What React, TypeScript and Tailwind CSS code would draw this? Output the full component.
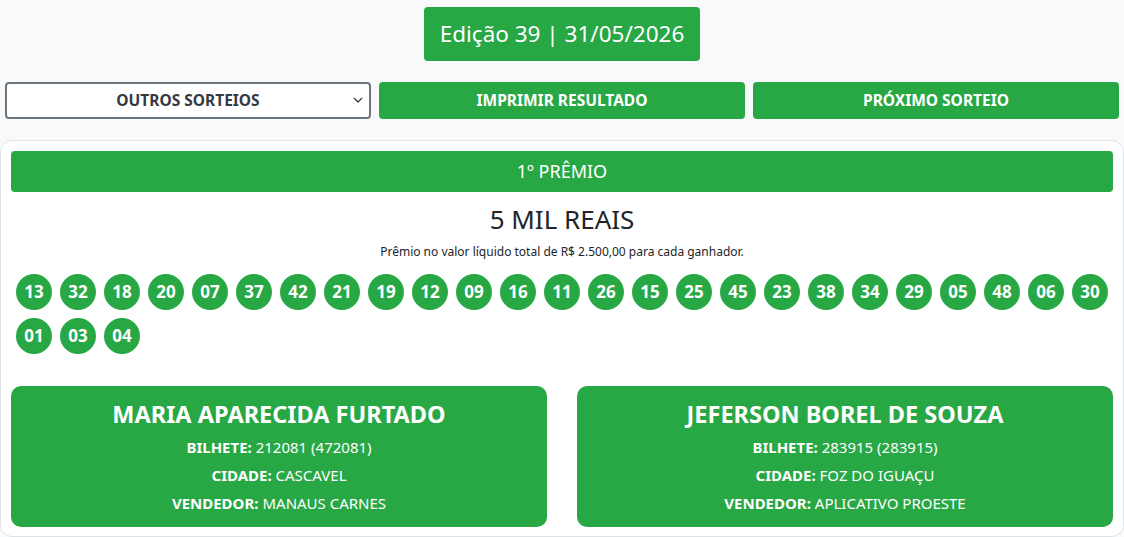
import React from 'react';

const numbers = [
  '13', '32', '18', '20', '07', '37', '42', '21', '19', '12', '09', '16', '11', '26', '15', '25', '45', '23', '38', '34',
  '29', '05', '48', '06', '30', '01', '03', '04',
];

type Winner = {
  name: string;
  bilhete: string;
  cidade: string;
  vendedor: string;
};

const winners: Winner[] = [
  { name: 'MARIA APARECIDA FURTADO', bilhete: '212081 (472081)', cidade: 'CASCAVEL', vendedor: 'MANAUS CARNES' },
  { name: 'JEFERSON BOREL DE SOUZA', bilhete: '283915 (283915)', cidade: 'FOZ DO IGUAÇU', vendedor: 'APLICATIVO PROESTE' },
];

function WinnerCard({ w }: { w: Winner }) {
  return (
    <div className="bg-[#28a745] text-white rounded-[10px] pt-[13px] pb-[10px] text-center">
      <h3 className="text-[23.5px] font-bold leading-[30px] mb-[4px]">{w.name}</h3>
      <p className="text-[15px] leading-[28px]"><b>BILHETE:</b> {w.bilhete}</p>
      <p className="text-[15px] leading-[28px]"><b>CIDADE:</b> {w.cidade}</p>
      <p className="text-[15px] leading-[28px]"><b>VENDEDOR:</b> {w.vendedor}</p>
    </div>
  );
}

export default function App() {
  return (
    <div className="min-h-screen bg-[#f8f9fa] font-['Noto_Sans',sans-serif] text-[#212529]">
      <div className="flex justify-center pt-[7px]">
        <div className="bg-[#28a745] text-white text-[22.5px] leading-[54px] px-[16px] rounded-[4px]">
          Edição 39 | 31/05/2026
        </div>
      </div>

      <div className="grid grid-cols-3 gap-[8px] px-[5px] mt-[21px]">
        <div className="relative">
          <select className="w-full h-[37px] appearance-none bg-white border-2 border-[#6c757d] rounded-[4px] text-center text-[15.5px] font-bold text-[#343a40]">
            <option>OUTROS SORTEIOS</option>
          </select>
          <svg className="absolute right-[8px] top-[15px] pointer-events-none" width="10" height="7" viewBox="0 0 10 7">
            <path d="M1 1l4 4 4-4" fill="none" stroke="#343a40" strokeWidth="1.3" />
          </svg>
        </div>
        <button className="h-[37px] bg-[#28a745] text-white text-[15.5px] font-bold rounded-[4px]">IMPRIMIR RESULTADO</button>
        <button className="h-[37px] bg-[#28a745] text-white text-[15.5px] font-bold rounded-[4px]">PRÓXIMO SORTEIO</button>
      </div>

      <div className="mt-[21px] bg-white border border-[#dee2e6] rounded-[12px] p-[10px] pb-[9px]">
        <div className="bg-[#28a745] text-white text-[18px] leading-[41px] text-center rounded-[4px]">1º PRÊMIO</div>
        <h2 className="text-[26px] text-center leading-[36px] mt-[9px]">5 MIL REAIS</h2>
        <p className="text-[12px] text-center leading-[18px] mt-[6px]">Prêmio no valor líquido total de R$ 2.500,00 para cada ganhador.</p>

        <div className="flex flex-wrap gap-[8px] px-[5px] mt-[13px]">
          {numbers.map((n, i) => (
            <div key={i} className="w-[36px] h-[36px] rounded-full bg-[#28a745] text-white font-bold text-[17px] flex items-center justify-center">
              {n}
            </div>
          ))}
        </div>

        <div className="grid grid-cols-2 gap-[30px] mt-[32px]">
          {winners.map((w) => (
            <WinnerCard key={w.name} w={w} />
          ))}
        </div>
      </div>
    </div>
  );
}
